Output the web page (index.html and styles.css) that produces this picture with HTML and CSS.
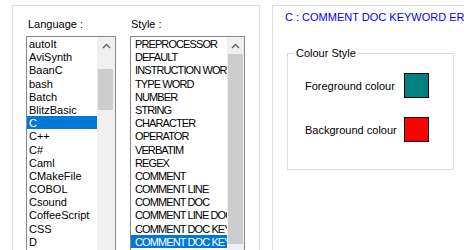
FILE: index.html
```html
<!DOCTYPE html>
<html>
<head>
<meta charset="utf-8">
<link rel="stylesheet" href="styles.css">
</head>
<body>
<div class="frame frame-left">
  <div class="col col-lang">
    <div class="label">Language :</div>
    <div class="listbox lang-box">
      <ul class="items">
        <li>autoIt</li>
        <li>AviSynth</li>
        <li>BaanC</li>
        <li>bash</li>
        <li>Batch</li>
        <li>BlitzBasic</li>
        <li class="sel">C</li>
        <li>C++</li>
        <li>C#</li>
        <li>Caml</li>
        <li>CMakeFile</li>
        <li>COBOL</li>
        <li>Csound</li>
        <li>CoffeeScript</li>
        <li>CSS</li>
        <li>D</li>
        <li>DIFF</li>
      </ul>
      <div class="scrollbar">
        <div class="arrow"><svg width="9" height="6" viewBox="0 0 9 6"><path d="M1 5 L4.5 1.5 L8 5" fill="none" stroke="#606060" stroke-width="1.4"/></svg></div>
        <div class="track lang-track"><div class="thumb lang-thumb"></div></div>
      </div>
    </div>
  </div>
  <div class="col col-style">
    <div class="label label-style">Style :</div>
    <div class="listbox style-box">
      <ul class="items style-items">
        <li>PREPROCESSOR</li>
        <li>DEFAULT</li>
        <li>INSTRUCTION WORD</li>
        <li>TYPE WORD</li>
        <li>NUMBER</li>
        <li>STRING</li>
        <li>CHARACTER</li>
        <li>OPERATOR</li>
        <li>VERBATIM</li>
        <li>REGEX</li>
        <li>COMMENT</li>
        <li>COMMENT LINE</li>
        <li>COMMENT DOC</li>
        <li>COMMENT LINE DOC</li>
        <li>COMMENT DOC KEYWORD</li>
        <li class="sel">COMMENT DOC KEYWORD ERROR</li>
        <li>PREPROCESSOR COMMENT</li>
      </ul>
      <div class="scrollbar">
        <div class="arrow"><svg width="9" height="6" viewBox="0 0 9 6"><path d="M1 5 L4.5 1.5 L8 5" fill="none" stroke="#606060" stroke-width="1.4"/></svg></div>
        <div class="track"><div class="thumb style-thumb"></div></div>
      </div>
    </div>
  </div>
</div>
<div class="frame frame-right">
  <div class="title">C : COMMENT DOC KEYWORD ERROR</div>
  <div class="group">
    <div class="legend">Colour Style</div>
    <div class="group-grid">
      <div class="glabel">Foreground colour</div>
      <div class="swatch fg"></div>
      <div class="glabel">Background colour</div>
      <div class="swatch bg"></div>
    </div>
  </div>
</div>
</body>
</html>
```

FILE: styles.css
```css
html, body {
  margin: 0;
  padding: 0;
  background: #ffffff;
}
body {
  width: 464px;
  height: 250px;
  overflow: hidden;
  display: flex;
  align-items: flex-start;
  gap: 12px;
  padding: 5px 0 0 12px;
  box-sizing: border-box;
  font-family: "Liberation Sans", Arial, sans-serif;
  font-size: 11px;
  color: #000;
}
.frame {
  border: 1px solid #dcdcdc;
  border-bottom: none;
  height: 270px;
  box-sizing: border-box;
  flex: none;
}
.frame-left {
  width: 248px;
  display: flex;
  gap: 14px;
  padding: 12px 0 0 13px;
}
.col {
  display: flex;
  flex-direction: column;
}
.label {
  line-height: 13px;
  height: 13px;
  padding-left: 2px;
  margin-bottom: 5px;
  white-space: nowrap;
}
.label-style {
  padding-left: 1px;
}
.listbox {
  border: 1px solid #828790;
  display: flex;
  height: 240px;
  box-sizing: border-box;
  overflow: hidden;
}
.lang-box { width: 90px; }
.style-box { width: 115px; }
.items {
  list-style: none;
  margin: 0;
  padding: 0;
  flex: 1;
  min-width: 0;
  overflow: hidden;
}
.items li {
  height: 13.2px;
  line-height: 12.2px;
  padding: 1px 0 0 2px;
  box-sizing: border-box;
  white-space: nowrap;
  overflow: hidden;
}
.style-items li {
  padding-left: 4px;
  letter-spacing: -0.9px;
}
.items li.sel {
  background: #0078d7;
  color: #ffffff;
}
.scrollbar {
  width: 18px;
  flex: none;
  background: #f0f0f0;
  display: flex;
  flex-direction: column;
}
.style-box .scrollbar { width: 17px; }
.arrow {
  height: 17px;
  display: flex;
  align-items: center;
  justify-content: center;
}
.track {
  flex: 1;
  display: flex;
  flex-direction: column;
  padding: 0 1px;
}
.lang-track { padding: 15px 2px 0 1px; }
.thumb {
  background: #cdcdcd;
}
.lang-thumb { height: 41px; }
.style-thumb { height: 190px; }
.frame-right {
  width: 200px;
  padding: 5px 0 0 14px;
}
.title {
  color: #0000ff;
  line-height: 13px;
  white-space: nowrap;
  margin-left: -2px;
}
.group {
  position: relative;
  margin-top: 29px;
  width: 167px;
  height: 117px;
  border: 1px solid #dcdcdc;
  box-sizing: border-box;
  padding: 19px 0 0 17px;
}
.legend {
  position: absolute;
  top: -7px;
  left: 6px;
  padding: 0 2px;
  background: #fff;
  line-height: 13px;
}
.group-grid {
  display: grid;
  grid-template-columns: 99px 25px;
  grid-auto-rows: 25px;
  row-gap: 19px;
  align-items: center;
}
.glabel {
  white-space: nowrap;
}
.swatch {
  width: 25px;
  height: 25px;
  border: 1px solid #000;
  box-sizing: border-box;
}
.fg { background: #008080; }
.bg { background: #ff0000; }
```
